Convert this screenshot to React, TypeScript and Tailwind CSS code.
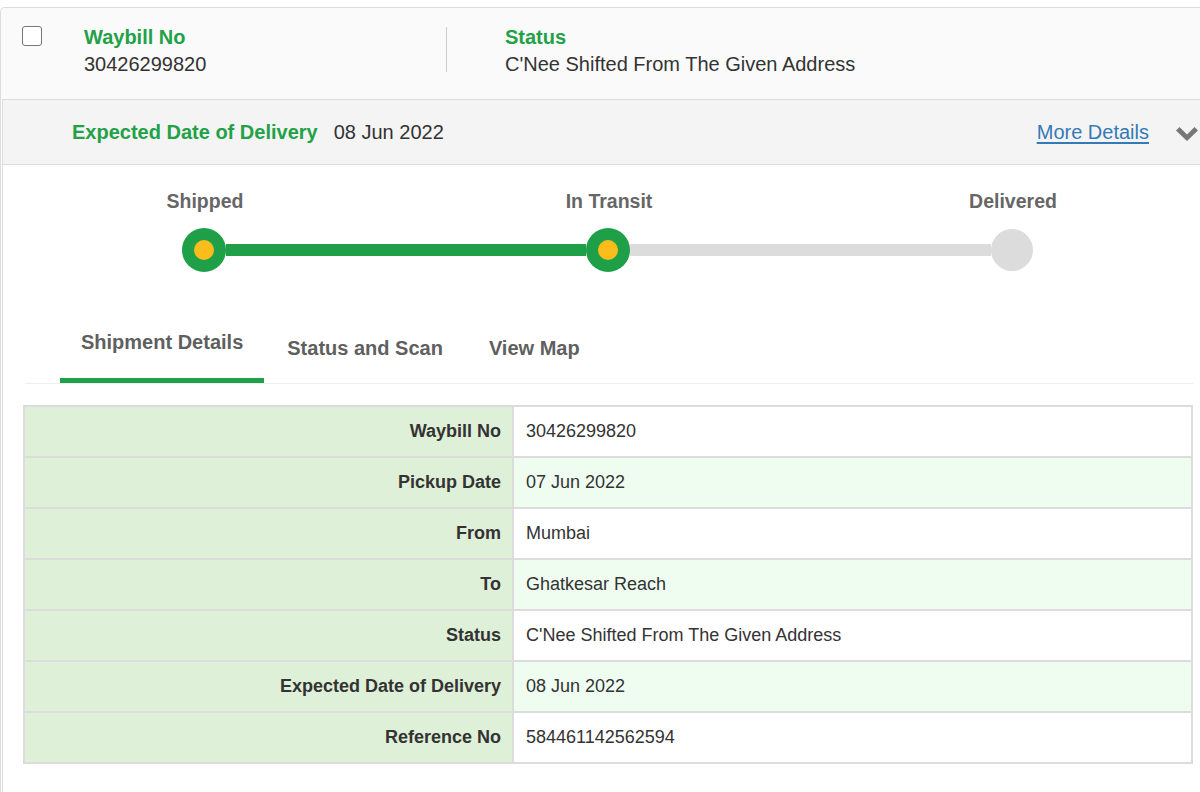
import React from 'react'

const rows = [
  { label: 'Waybill No', value: '30426299820' },
  { label: 'Pickup Date', value: '07 Jun 2022' },
  { label: 'From', value: 'Mumbai' },
  { label: 'To', value: 'Ghatkesar Reach' },
  { label: 'Status', value: "C'Nee Shifted From The Given Address" },
  { label: 'Expected Date of Delivery', value: '08 Jun 2022' },
  { label: 'Reference No', value: '584461142562594' },
]

const tabs = ['Shipment Details', 'Status and Scan', 'View Map']

const DoneDot = () => (
  <div className="w-[44px] h-[44px] rounded-full bg-[#1f9f48] flex items-center justify-center shrink-0">
    <div className="w-[20px] h-[20px] rounded-full bg-[#fbbd1c]" />
  </div>
)

const App = () => {
  return (
    <div className="w-full h-[792px] overflow-hidden bg-white pt-[7px] font-['Liberation_Sans',Arial,sans-serif] text-[#333]">
      <div className="w-[1240px] border-t border-l border-[#dddddd] rounded-tl-[5px]">
        {/* top summary */}
        <div className="h-[91px] bg-[#fafafa] flex pt-[16px] rounded-tl-[5px]">
          <div className="pl-[21px] pt-[2px]">
            <input
              type="checkbox"
              className="appearance-none block w-[20px] h-[20px] border-[1.5px] border-[#767676] rounded-[3px] bg-white"
            />
          </div>
          <div className="ml-[42px] w-[362px] text-[20px] leading-[27px]">
            <div className="font-bold text-[#23a147]">Waybill No</div>
            <div>30426299820</div>
          </div>
          <div className="w-px h-[45px] mt-[3px] bg-[#cccccc]" />
          <div className="ml-[58px] text-[20px] leading-[27px]">
            <div className="font-bold text-[#23a147]">Status</div>
            <div>C'Nee Shifted From The Given Address</div>
          </div>
        </div>

        <div className="ml-px border-l border-[#dddddd] pb-[60px]">
          {/* expected delivery strip */}
          <div className="w-[1238px] h-[66px] bg-[#f4f4f4] border-y border-[#dddddd] flex items-center pl-[69px] text-[20px]">
            <span className="font-bold text-[#23a147]">Expected Date of Delivery</span>
            <span className="ml-[16px]">08 Jun 2022</span>
            <a href="#" className="ml-auto text-[#337ab7] underline underline-offset-[3px]">More Details</a>
            <svg className="ml-[27px] mr-[43px] mt-[3px]" width="22" height="14" viewBox="0 0 22 14">
              <path d="M0 3.5 L3.5 0 L11 7.5 L18.5 0 L22 3.5 L11 14 Z" fill="#777777" />
            </svg>
          </div>

          {/* progress */}
          <div className="flex pt-[24px] text-[19.5px] leading-[24px] font-bold text-[#666666]">
            <div className="w-[404px] shrink-0 text-center">Shipped</div>
            <div className="w-[404px] shrink-0 text-center">In Transit</div>
            <div className="w-[404px] shrink-0 text-center">Delivered</div>
          </div>
          <div className="flex items-center mt-[15px] -ml-px">
            <div className="w-[404px] shrink-0 flex items-center">
              <div className="flex-1" />
              <DoneDot />
              <div className="flex-1 h-[12px] bg-[#1f9f48]" />
            </div>
            <div className="w-[404px] shrink-0 flex items-center">
              <div className="flex-1 h-[12px] bg-[#1f9f48]" />
              <DoneDot />
              <div className="flex-1 h-[12px] bg-[#dddcdd]" />
            </div>
            <div className="w-[404px] shrink-0 flex items-center">
              <div className="flex-1 h-[12px] bg-[#dddcdd]" />
              <div className="w-[42px] h-[42px] rounded-full bg-[#dddcdd] shrink-0" />
              <div className="flex-1" />
            </div>
          </div>

          {/* tabs */}
          <div className="ml-[22px] w-[1168px] mt-[58px] border-b border-[#eeeeee] flex items-end pl-[35px] text-[20px] leading-[24px] font-bold text-[#5f5f5f]">
            {tabs.map((t, i) =>
              i === 0 ? (
                <div key={t} className="px-[21px] pb-[24px] border-b-[5px] border-[#1f9f48]">{t}</div>
              ) : (
                <div key={t} className="px-[23px] pb-[23px]">{t}</div>
              )
            )}
          </div>

          {/* details table */}
          <table className="ml-[20px] mt-[21px] w-[1170px] border-collapse text-[18px]">
            <tbody>
              {rows.map((r, i) => (
                <tr key={r.label} className="h-[51px]">
                  <td className="w-[489px] border-2 border-[#dcdcdc] bg-[#dff0d8] text-right font-bold pr-[11px]">{r.label}</td>
                  <td className={`border-2 border-[#dcdcdc] pl-[12px] ${i % 2 === 1 ? 'bg-[#effdf1]' : 'bg-white'}`}>{r.value}</td>
                </tr>
              ))}
            </tbody>
          </table>
        </div>
      </div>
    </div>
  )
}

export default App
